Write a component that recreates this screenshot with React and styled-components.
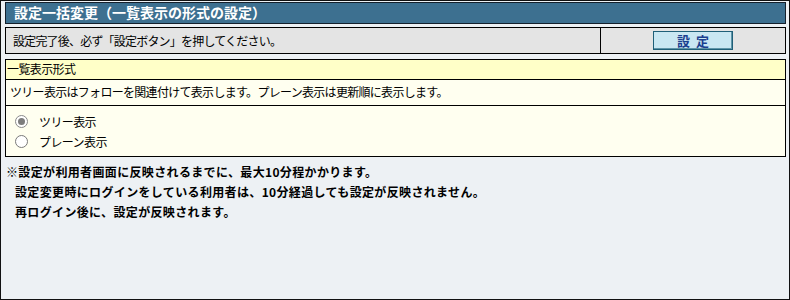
import React from "react";
import styled, { createGlobalStyle } from "styled-components";

const Global = createGlobalStyle`
  html, body { margin: 0; padding: 0; background: #edf1f4; }
  * { box-sizing: border-box; }
  body { font-family: "Noto Sans CJK JP", "Liberation Sans", sans-serif; color: #000; }
`;

const Frame = styled.div`
  width: 790px;
  height: 300px;
  border: 1px solid #111;
  background: #edf1f4;
  padding: 1px 3px 0 4px;
  display: flex;
  flex-direction: column;
`;

const TitleBar = styled.div`
  height: 22px;
  background: #3d7090;
  border: 1px solid #14202c;
  color: #fff;
  font-weight: bold;
  font-size: 14px;
  line-height: 19px;
  padding-left: 8px;
  letter-spacing: 0;
`;

const ActionRow = styled.div`
  margin-top: 3px;
  height: 27px;
  display: grid;
  grid-template-columns: 594px 1fr;
  border: 1px solid #000;
  background: #e4e4e4;
`;

const Cell = styled.div`
  display: flex;
  align-items: center;
  justify-content: ${(p) => (p.center ? "center" : "flex-start")};
  padding-left: ${(p) => (p.center ? "0" : "7px")};
  border-left: ${(p) => (p.divider ? "1px solid #000" : "none")};
  font-size: 12px;
  letter-spacing: -0.8px;
`;

const SetButton = styled.button`
  width: 80px;
  height: 19px;
  padding: 0;
  background: #c9e7f2;
  border: 1px solid #1f5f78;
  box-shadow: inset -1px -1px 0 #5f95a8;
  color: #1b3f8f;
  font-family: inherit;
  font-weight: bold;
  font-size: 13px;
  letter-spacing: 6px;
  text-indent: 6px;
  line-height: 17px;
`;

const Section = styled.div`
  margin-top: 5px;
  border: 1px solid #000;
  background: #fffff0;
`;

const SectionHead = styled.div`
  height: 20px;
  background: #ffffc8;
  border-bottom: 1px solid #000;
  font-size: 12px;
  line-height: 18px;
  padding-left: 1px;
  letter-spacing: -0.6px;
`;

const Desc = styled.div`
  height: 26px;
  border-bottom: 1px solid #000;
  font-size: 12px;
  line-height: 24px;
  padding-left: 4px;
  letter-spacing: -0.7px;
`;

const Options = styled.div`
  padding: 5px 0 5px 9px;
  display: flex;
  flex-direction: column;
`;

const Option = styled.label`
  height: 20px;
  display: flex;
  align-items: center;
  gap: 11px;
  font-size: 12px;
  letter-spacing: -0.6px;
`;

const Radio = styled.span`
  width: 13px;
  height: 13px;
  border-radius: 50%;
  border: 1px solid ${(p) => (p.checked ? "#8a8a8a" : "#7a7a7a")};
  background: #fff;
  display: flex;
  align-items: center;
  justify-content: center;
  &::after {
    content: "";
    width: 7px;
    height: 7px;
    border-radius: 50%;
    background: ${(p) => (p.checked ? "#7d7d7d" : "transparent")};
  }
`;

const Notes = styled.div`
  margin-top: 5px;
  font-weight: bold;
  font-size: 12px;
  line-height: 20px;
  letter-spacing: 0.35px;
  padding-left: 1px;
`;

const NoteLine = styled.div`
  padding-left: ${(p) => (p.indent ? "9px" : "0")};
`;

export default function App() {
  return (
    <>
      <Global />
      <Frame>
        <TitleBar>設定一括変更（一覧表示の形式の設定）</TitleBar>
        <ActionRow>
          <Cell>設定完了後、必ず「設定ボタン」を押してください。</Cell>
          <Cell divider center>
            <SetButton>設定</SetButton>
          </Cell>
        </ActionRow>
        <Section>
          <SectionHead>一覧表示形式</SectionHead>
          <Desc>ツリー表示はフォローを関連付けて表示します。プレーン表示は更新順に表示します。</Desc>
          <Options>
            <Option>
              <Radio checked />
              ツリー表示
            </Option>
            <Option>
              <Radio />
              プレーン表示
            </Option>
          </Options>
        </Section>
        <Notes>
          <NoteLine>※設定が利用者画面に反映されるまでに、最大10分程かかります。</NoteLine>
          <NoteLine indent>設定変更時にログインをしている利用者は、10分経過しても設定が反映されません。</NoteLine>
          <NoteLine indent>再ログイン後に、設定が反映されます。</NoteLine>
        </Notes>
      </Frame>
    </>
  );
}
